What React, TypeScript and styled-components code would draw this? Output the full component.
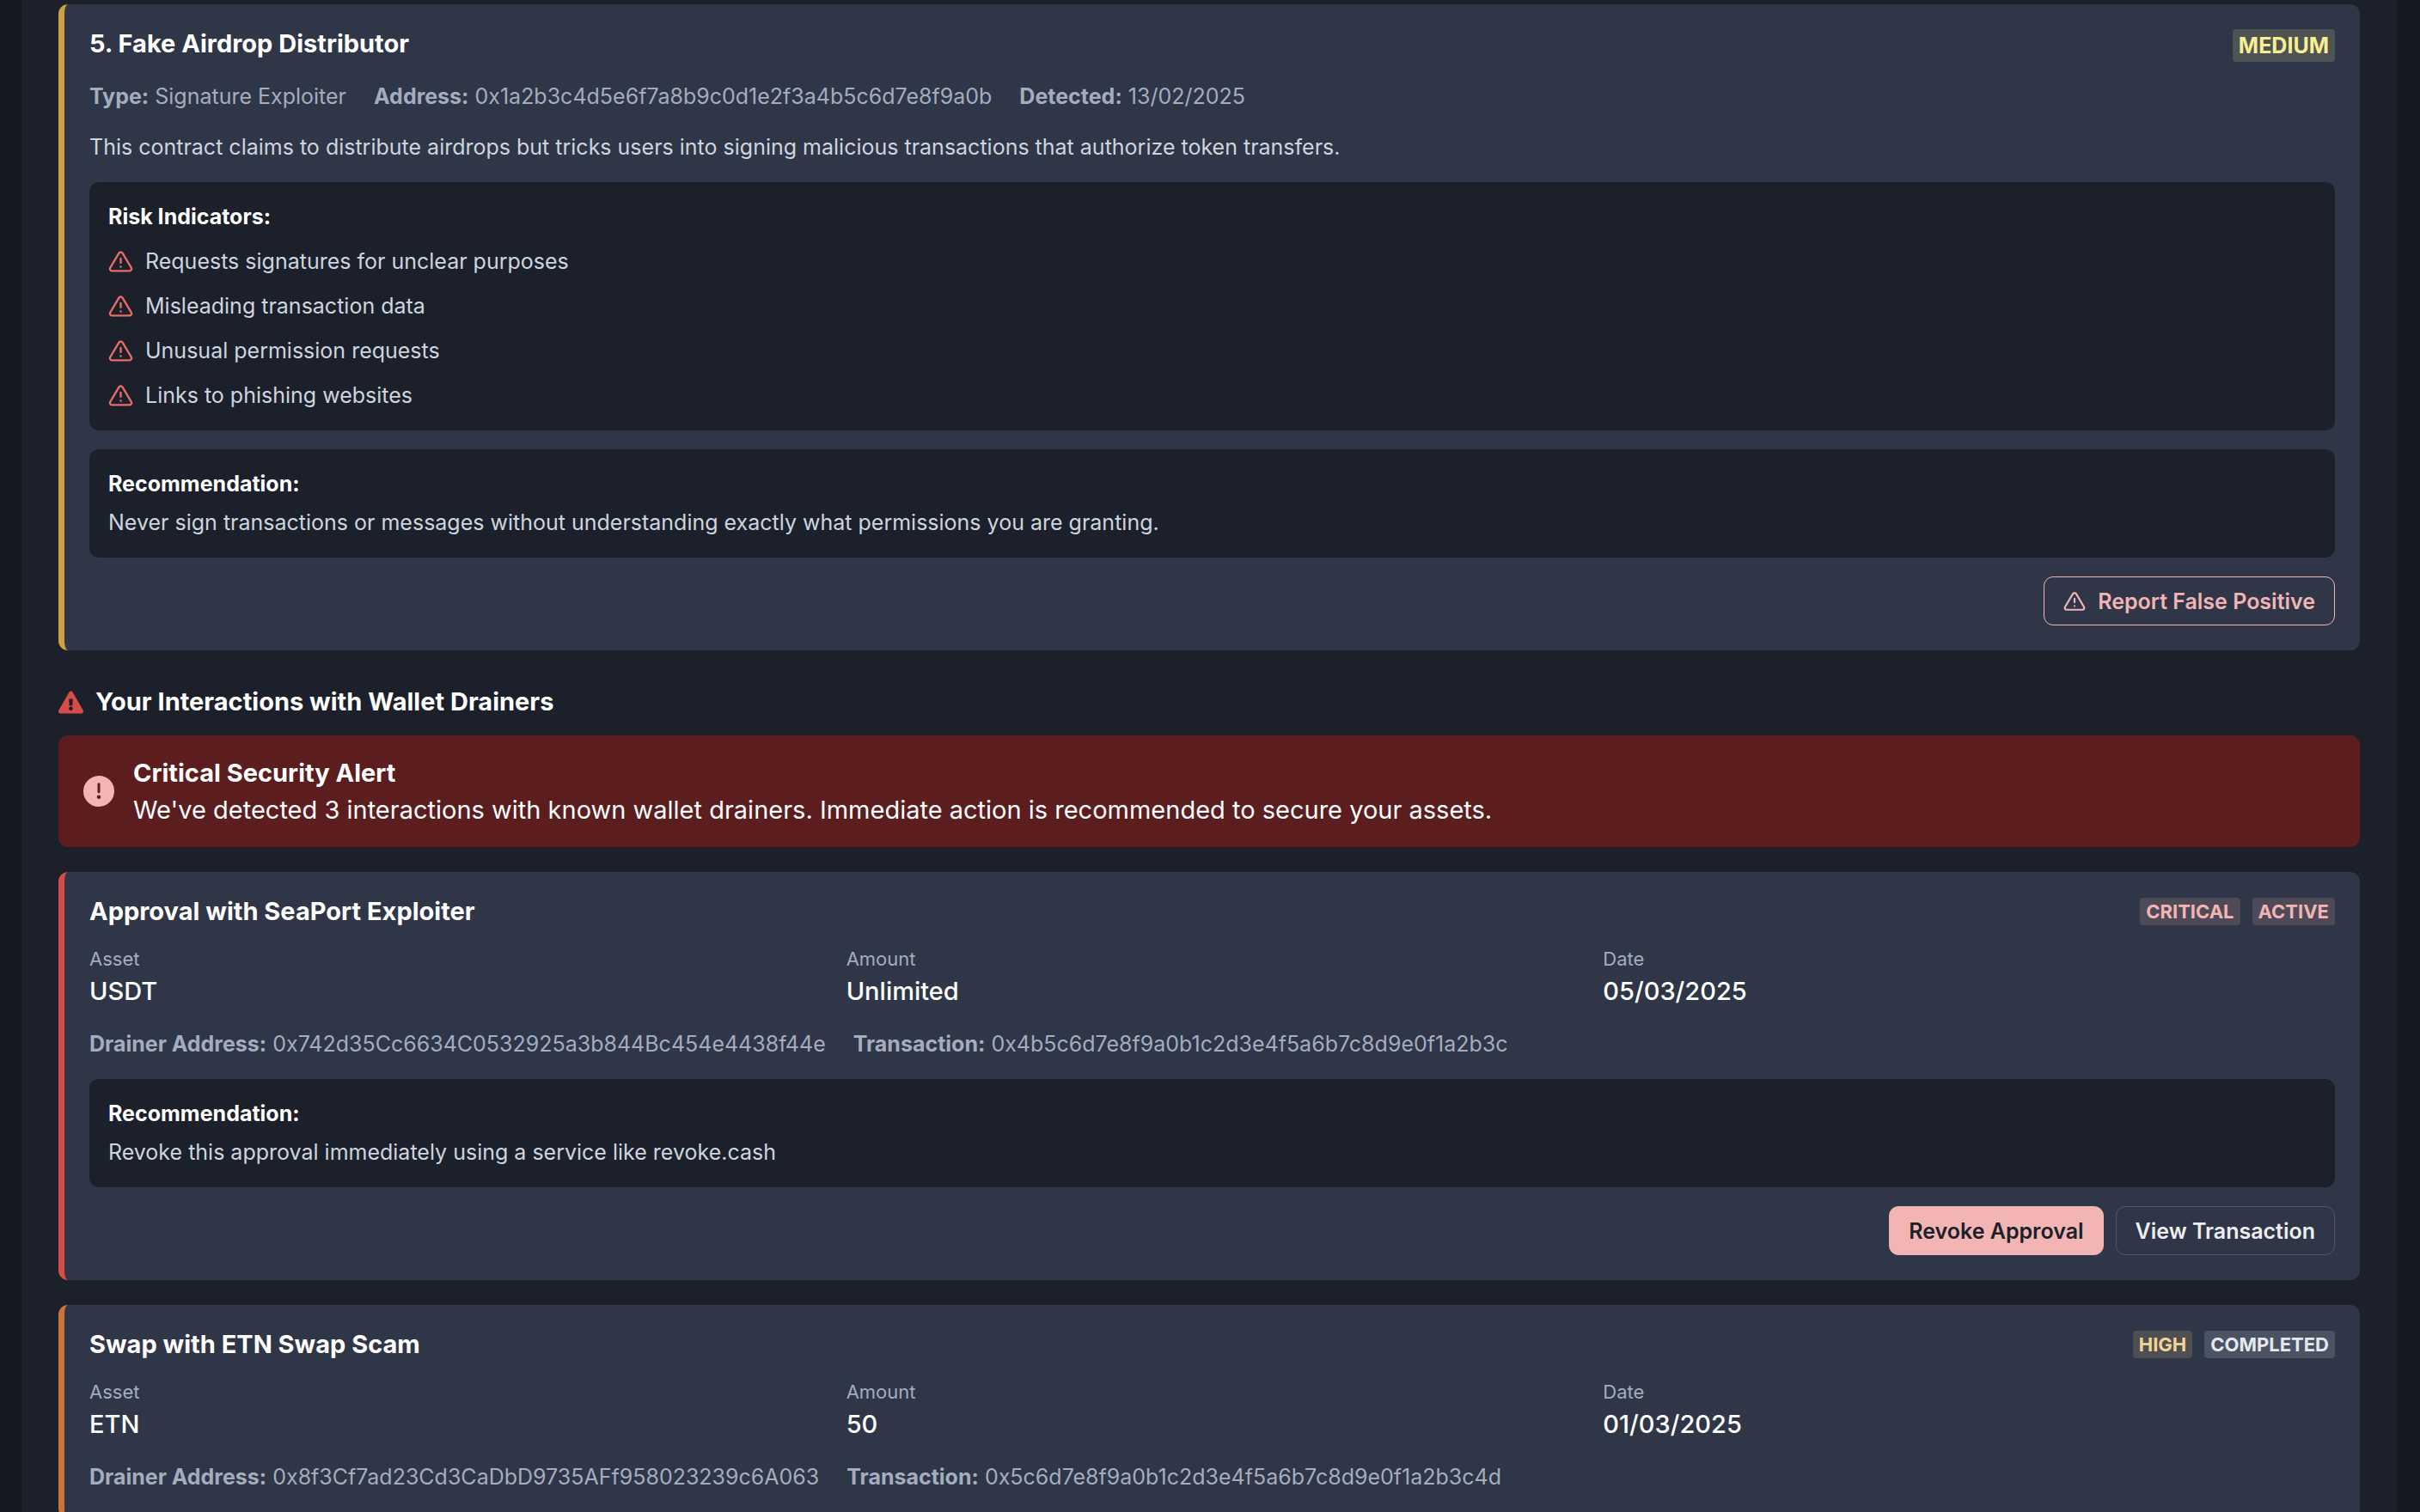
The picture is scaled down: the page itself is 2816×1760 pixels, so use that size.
import React from "react";
import styled, { createGlobalStyle } from "styled-components";
import { FaExclamationTriangle } from "react-icons/fa";
import { FiAlertTriangle } from "react-icons/fi";

const c = {
  page: "#171921",
  panel: "#1c202b",
  card: "#2f3647",
  text: "#ffffff",
  soft: "#cdd5df",
  muted: "#a3adbe",
  red: "#d54d45",
  redIcon: "#e56d68",
  pink: "#f3b5b4",
  alert: "#5b1d1e",
};

const tones = {
  pink: { fg: "#f3b5b4", bg: "rgba(243, 181, 180, 0.16)" },
  yellow: { fg: "#f8ef94", bg: "rgba(248, 239, 148, 0.16)" },
  orange: { fg: "#f4d495", bg: "rgba(244, 212, 149, 0.16)" },
  gray: { fg: "#e3e8ef", bg: "rgba(227, 232, 239, 0.16)" },
};
type Tone = keyof typeof tones;

const GlobalStyle = createGlobalStyle`
  *, *::before, *::after { box-sizing: border-box; }
  html { background: ${c.page}; }
  body {
    margin: 0;
    background: ${c.page};
    color: ${c.text};
    font-family: Inter, "Liberation Sans", sans-serif;
    font-size: 25px;
    line-height: 37px;
    overflow: hidden;
  }
  h2, h3, h4, p, ul, dl, dd { margin: 0; padding: 0; }
  ul { list-style: none; }
`;

const Page = styled.div`
  height: 100vh;
  overflow: hidden;
  padding: 0 27px 0 25px;
`;

const Panel = styled.main`
  display: flex;
  flex-direction: column;
  gap: 43px;
  min-height: 100%;
  padding: 5px 43px 0;
  background: ${c.panel};
`;

const Section = styled.section`
  display: flex;
  flex-direction: column;
`;

const SectionTitle = styled.h2`
  display: flex;
  align-items: center;
  gap: 14px;
  margin-bottom: 22px;
  font-size: 29px;
  line-height: 34px;
  font-weight: 700;
  svg { color: ${c.red}; }
`;

const CardList = styled.div`
  display: flex;
  flex-direction: column;
  gap: 29px;
`;

const Card = styled.article<{ $accent: string }>`
  display: flex;
  flex-direction: column;
  gap: 22px;
  padding: 29px;
  border-left: 7px solid ${(p) => p.$accent};
  border-radius: 11px;
  background: ${c.card};
`;

const CardHeader = styled.header`
  display: flex;
  align-items: center;
  justify-content: space-between;
`;

const CardTitle = styled.h3`
  align-self: flex-start;
  font-size: 29px;
  line-height: 34px;
  font-weight: 700;
`;

const Badges = styled.div`
  display: flex;
  gap: 14px;
`;

const Badge = styled.span<{ $tone: Tone; $large?: boolean }>`
  padding: 0 7px;
  border-radius: 4px;
  font-size: ${(p) => (p.$large ? 25 : 22)}px;
  line-height: ${(p) => (p.$large ? 38 : 32)}px;
  font-weight: 700;
  text-transform: uppercase;
  color: ${(p) => tones[p.$tone].fg};
  background: ${(p) => tones[p.$tone].bg};
`;

const Meta = styled.div`
  display: flex;
  flex-wrap: wrap;
  column-gap: 32px;
  color: ${c.muted};
  strong { font-weight: 700; }
`;

const Description = styled.p`
  color: ${c.soft};
`;

const Box = styled.div<{ $gap: number }>`
  display: flex;
  flex-direction: column;
  gap: ${(p) => p.$gap}px;
  padding: 22px;
  border-radius: 11px;
  background: ${c.panel};
  color: ${c.soft};
`;

const BoxTitle = styled.h4`
  color: ${c.text};
  font-size: 25px;
  font-weight: 700;
`;

const RiskList = styled.ul`
  display: flex;
  flex-direction: column;
  gap: 15px;
`;

const RiskItem = styled.li`
  display: flex;
  align-items: center;
  gap: 14px;
  svg { color: ${c.redIcon}; }
`;

const Actions = styled.div`
  display: flex;
  justify-content: flex-end;
  gap: 14px;
`;

const Button = styled.button<{ $kind: "danger" | "solid" | "outline" }>`
  display: inline-flex;
  align-items: center;
  gap: 14px;
  height: 57px;
  padding: 0 22px;
  border: 1px solid
    ${(p) => (p.$kind === "outline" ? "rgba(255, 255, 255, 0.16)" : c.pink)};
  border-radius: 11px;
  background: ${(p) => (p.$kind === "solid" ? c.pink : "transparent")};
  color: ${(p) =>
    p.$kind === "solid" ? c.panel : p.$kind === "danger" ? c.pink : "#eeeef0"};
  font-family: inherit;
  font-size: 25px;
  font-weight: 600;
  line-height: 30px;
  cursor: pointer;
`;

const Alert = styled.div`
  display: flex;
  align-items: center;
  gap: 22px;
  margin-bottom: 29px;
  padding: 22px 29px;
  border-radius: 11px;
  background: ${c.alert};
  font-size: 29px;
  line-height: 43px;
  svg { color: ${c.pink}; flex: none; }
`;

const AlertTitle = styled.p`
  font-weight: 700;
`;

const Facts = styled.dl`
  display: grid;
  grid-template-columns: repeat(3, 1fr);
  gap: 29px;
  dt {
    color: ${c.muted};
    font-size: 22px;
    line-height: 32px;
  }
  dd {
    font-size: 29px;
    line-height: 43px;
    font-weight: 500;
  }
`;

const WarningCircle = () => (
  <svg viewBox="0 0 24 24" width="36" height="36" fill="currentColor" aria-hidden="true">
    <path d="M11.983,0a12.206,12.206,0,0,0-8.51,3.653A11.8,11.8,0,0,0,0,12.207,11.779,11.779,0,0,0,11.8,24h.214A12.111,12.111,0,0,0,24,11.791h0A11.766,11.766,0,0,0,11.983,0ZM10.5,16.542a1.476,1.476,0,0,1,1.449-1.53h.027a1.527,1.527,0,0,1,1.523,1.47,1.475,1.475,0,0,1-1.449,1.53h-.027A1.529,1.529,0,0,1,10.5,16.542ZM11,12.5v-6a1,1,0,0,1,2,0v6a1,1,0,1,1-2,0Z" />
  </svg>
);

const MetaItems = ({ items }: { items: [string, string][] }) => (
  <Meta>
    {items.map(([label, value]) => (
      <span key={label}>
        <strong>{label}:</strong> {value}
      </span>
    ))}
  </Meta>
);

const Recommendation = ({ children }: { children: React.ReactNode }) => (
  <Box $gap={8}>
    <BoxTitle>Recommendation:</BoxTitle>
    <p>{children}</p>
  </Box>
);

const risks = [
  "Requests signatures for unclear purposes",
  "Misleading transaction data",
  "Unusual permission requests",
  "Links to phishing websites",
];

interface Interaction {
  title: string;
  accent: string;
  badges: { text: string; tone: Tone }[];
  facts: [string, string][];
  meta: [string, string][];
  recommendation: string;
}

const interactions: Interaction[] = [
  {
    title: "Approval with SeaPort Exploiter",
    accent: c.red,
    badges: [
      { text: "Critical", tone: "pink" },
      { text: "Active", tone: "pink" },
    ],
    facts: [
      ["Asset", "USDT"],
      ["Amount", "Unlimited"],
      ["Date", "05/03/2025"],
    ],
    meta: [
      ["Drainer Address", "0x742d35Cc6634C0532925a3b844Bc454e4438f44e"],
      ["Transaction", "0x4b5c6d7e8f9a0b1c2d3e4f5a6b7c8d9e0f1a2b3c"],
    ],
    recommendation: "Revoke this approval immediately using a service like revoke.cash",
  },
  {
    title: "Swap with ETN Swap Scam",
    accent: "#ce7236",
    badges: [
      { text: "High", tone: "orange" },
      { text: "Completed", tone: "gray" },
    ],
    facts: [
      ["Asset", "ETN"],
      ["Amount", "50"],
      ["Date", "01/03/2025"],
    ],
    meta: [
      ["Drainer Address", "0x8f3Cf7ad23Cd3CaDbD9735AFf958023239c6A063"],
      ["Transaction", "0x5c6d7e8f9a0b1c2d3e4f5a6b7c8d9e0f1a2b3c4d"],
    ],
    recommendation: "",
  },
];

export default function App() {
  return (
    <>
      <GlobalStyle />
      <Page>
        <Panel>
          <Section>
            <Card $accent="#cea044">
              <CardHeader>
                <CardTitle>5. Fake Airdrop Distributor</CardTitle>
                <Badge $tone="yellow" $large>Medium</Badge>
              </CardHeader>
              <MetaItems
                items={[
                  ["Type", "Signature Exploiter"],
                  ["Address", "0x1a2b3c4d5e6f7a8b9c0d1e2f3a4b5c6d7e8f9a0b"],
                  ["Detected", "13/02/2025"],
                ]}
              />
              <Description>
                This contract claims to distribute airdrops but tricks users into signing
                malicious transactions that authorize token transfers.
              </Description>
              <Box $gap={15}>
                <BoxTitle>Risk Indicators:</BoxTitle>
                <RiskList>
                  {risks.map((risk) => (
                    <RiskItem key={risk}>
                      <FiAlertTriangle size={29} />
                      {risk}
                    </RiskItem>
                  ))}
                </RiskList>
              </Box>
              <Recommendation>
                Never sign transactions or messages without understanding exactly what
                permissions you are granting.
              </Recommendation>
              <Actions>
                <Button type="button" $kind="danger">
                  <FiAlertTriangle size={26} />
                  Report False Positive
                </Button>
              </Actions>
            </Card>
          </Section>

          <Section>
            <SectionTitle>
              <FaExclamationTriangle size={29} />
              Your Interactions with Wallet Drainers
            </SectionTitle>
            <Alert role="alert">
              <WarningCircle />
              <div>
                <AlertTitle>Critical Security Alert</AlertTitle>
                <p>
                  We've detected 3 interactions with known wallet drainers. Immediate action
                  is recommended to secure your assets.
                </p>
              </div>
            </Alert>
            <CardList>
              {interactions.map((item) => (
                <Card key={item.title} $accent={item.accent}>
                  <CardHeader>
                    <CardTitle>{item.title}</CardTitle>
                    <Badges>
                      {item.badges.map((b) => (
                        <Badge key={b.text} $tone={b.tone}>{b.text}</Badge>
                      ))}
                    </Badges>
                  </CardHeader>
                  <Facts>
                    {item.facts.map(([label, value]) => (
                      <div key={label}>
                        <dt>{label}</dt>
                        <dd>{value}</dd>
                      </div>
                    ))}
                  </Facts>
                  <MetaItems items={item.meta} />
                  {item.recommendation && (
                    <>
                      <Recommendation>{item.recommendation}</Recommendation>
                      <Actions>
                        <Button type="button" $kind="solid">Revoke Approval</Button>
                        <Button type="button" $kind="outline">View Transaction</Button>
                      </Actions>
                    </>
                  )}
                </Card>
              ))}
            </CardList>
          </Section>
        </Panel>
      </Page>
    </>
  );
}
